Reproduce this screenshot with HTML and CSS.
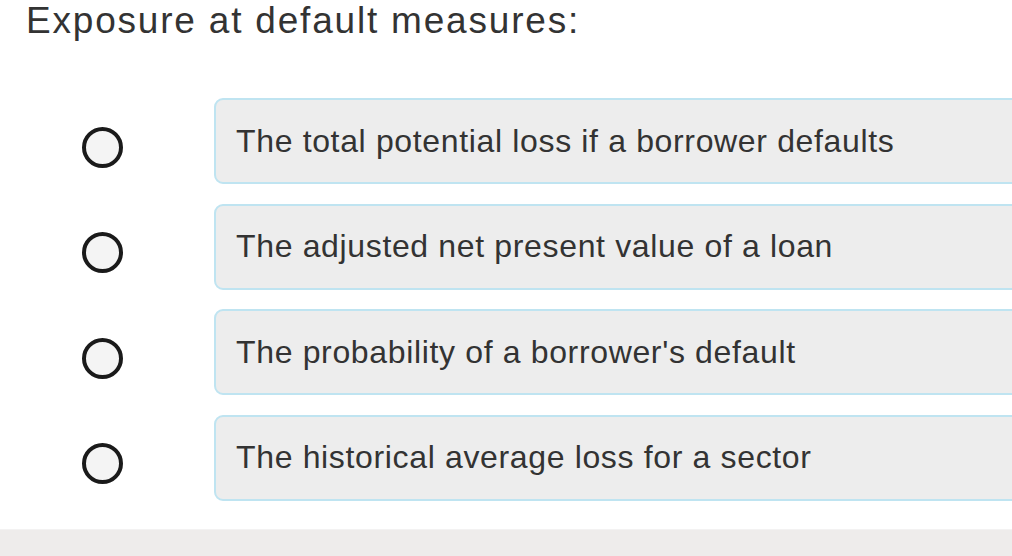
FILE: index.html
```html
<!DOCTYPE html>
<html>
<head>
<meta charset="utf-8">
<link rel="stylesheet" href="styles.css">
</head>
<body>
<div class="page">
  <div class="question">Exposure at default measures:</div>
  <div class="options">
    <div class="option">
      <div class="radio-col"><span class="radio"></span></div>
      <div class="answer">The total potential loss if a borrower defaults</div>
    </div>
    <div class="option">
      <div class="radio-col"><span class="radio"></span></div>
      <div class="answer">The adjusted net present value of a loan</div>
    </div>
    <div class="option">
      <div class="radio-col"><span class="radio"></span></div>
      <div class="answer">The probability of a borrower's default</div>
    </div>
    <div class="option">
      <div class="radio-col"><span class="radio"></span></div>
      <div class="answer">The historical average loss for a sector</div>
    </div>
  </div>
</div>
<div class="footer"></div>
</body>
</html>
```

FILE: styles.css
```css
html, body {
  margin: 0;
  padding: 0;
  background: #ffffff;
  overflow: hidden;
}
body {
  width: 1012px;
  height: 556px;
  font-family: "Liberation Sans", Arial, sans-serif;
  color: #2b2b2b;
  display: flex;
  flex-direction: column;
}
.page {
  flex: 1;
  padding: 0 0 0 26px;
}
.question {
  font-size: 37px;
  line-height: 40px;
  letter-spacing: 1.8px;
  padding-top: 1px;
  color: #333333;
}
.options {
  margin-top: 57px;
  display: flex;
  flex-direction: column;
  gap: 19.5px;
  width: 1030px;
}
.option {
  display: flex;
  align-items: center;
}
.radio-col {
  width: 132px;
  padding-left: 56px;
  display: flex;
  justify-content: flex-start;
}
.radio {
  display: block;
  width: 33px;
  height: 33px;
  margin-top: 12px;
  border: 4px solid #1a1a1a;
  border-radius: 50%;
  background: #f4f4f4;
  box-sizing: content-box;
}
.answer {
  flex: 1;
  height: 82px;
  box-sizing: content-box;
  display: flex;
  align-items: center;
  padding-left: 20px;
  background: #ededed;
  border: 2px solid #bfe4f1;
  border-radius: 9px;
  font-size: 32px;
  letter-spacing: 0.65px;
  color: #333333;
}
.footer {
  height: 26px;
  background: #eeeceb;
  border-top: 1px solid #f3f2f2;
}
```
